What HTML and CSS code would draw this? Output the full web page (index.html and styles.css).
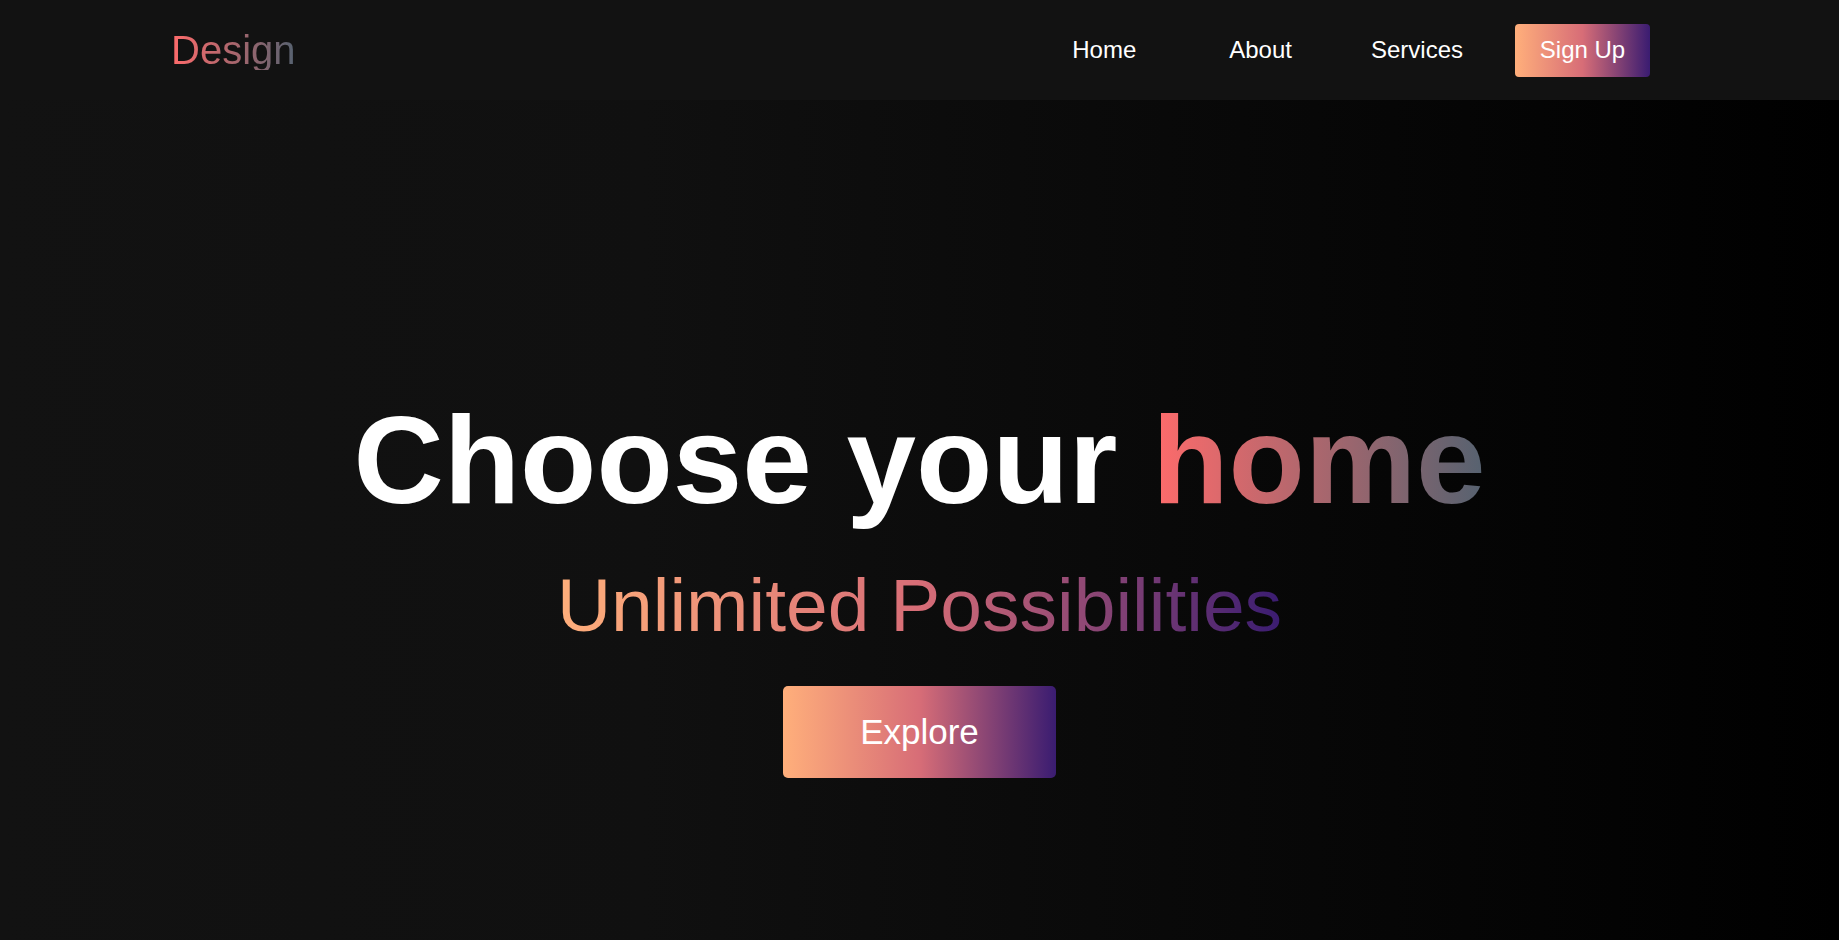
FILE: index.html
```html
<!DOCTYPE html>
<html lang="en">
<head>
<meta charset="utf-8">
<title>Design</title>
<link rel="stylesheet" href="styles.css">
</head>
<body>
<header class="navbar">
  <a class="logo" href="#">Design</a>
  <nav class="menu">
    <a class="menu-link link-home" href="#">Home</a>
    <a class="menu-link link-about" href="#">About</a>
    <a class="menu-link link-services" href="#">Services</a>
    <a class="signup" href="#">Sign Up</a>
  </nav>
</header>
<main class="hero">
  <h1 class="title">Choose your <span class="accent">home</span></h1>
  <h2 class="subtitle">Unlimited Possibilities</h2>
  <a class="explore" href="#">Explore</a>
</main>
</body>
</html>
```
FILE: styles.css
```css
* { box-sizing: border-box; }
html, body { margin: 0; padding: 0; }
body {
  font-family: "Liberation Sans", Arial, sans-serif;
  background: #121212;
  color: #fff;
  height: 940px;
  overflow: hidden;
}
a { text-decoration: none; color: inherit; }

.navbar {
  height: 100px;
  background: #121212;
  display: flex;
  align-items: center;
  justify-content: space-between;
  padding: 0 189px 0 171px;
}
.logo {
  font-size: 40px;
  line-height: 1;
  background: linear-gradient(to right, #ff6b6b, #556270);
  -webkit-background-clip: text;
  background-clip: text;
  color: transparent;
}
.menu {
  display: flex;
  align-items: center;
}
.menu-link {
  font-size: 24px;
  color: #fff;
}
.link-home { margin-right: 93px; }
.link-about { margin-right: 79px; }
.link-services { margin-right: 52px; }
.signup {
  font-size: 24px;
  color: #fff;
  height: 53px;
  width: 135px;
  display: flex;
  align-items: center;
  justify-content: center;
  border-radius: 4px;
  background: linear-gradient(to right, #ffaf7b, #d76d77, #3a1c71);
}

.hero {
  height: 840px;
  background: linear-gradient(to right, #121212 0%, #101010 35%, #000 100%);
  display: flex;
  flex-direction: column;
  align-items: center;
  padding-top: 288px;
}
.title {
  margin: 0;
  font-size: 125px;
  font-weight: 700;
  line-height: 1.15;
  color: #fff;
}
.accent {
  background: linear-gradient(to right, #ff6b6b, #556270);
  -webkit-background-clip: text;
  background-clip: text;
  color: transparent;
}
.subtitle {
  margin: 30px 0 0;
  font-size: 75px;
  font-weight: 400;
  line-height: 1.15;
  background: linear-gradient(to right, #ffaf7b, #d76d77, #3a1c71);
  -webkit-background-clip: text;
  background-clip: text;
  color: transparent;
}
.explore {
  margin-top: 38px;
  width: 273px;
  height: 92px;
  display: flex;
  align-items: center;
  justify-content: center;
  font-size: 35px;
  color: #fff;
  border-radius: 5px;
  background: linear-gradient(to right, #ffaf7b, #d76d77, #3a1c71);
}
```
